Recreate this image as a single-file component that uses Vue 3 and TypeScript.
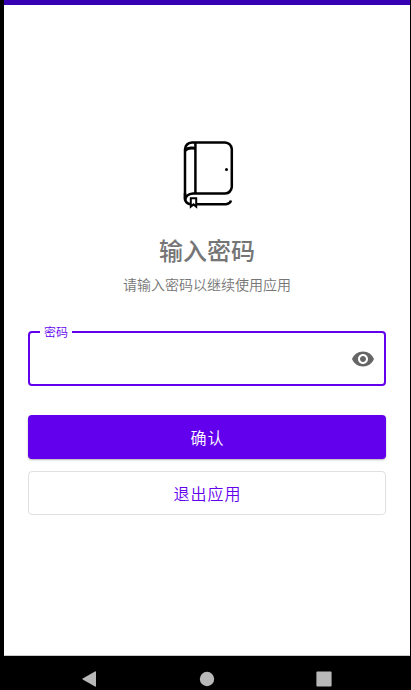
<script setup lang="ts">
import { ref } from 'vue'

const password = ref('')
const visible = ref(false)
</script>

<template>
  <div class="screen">
    <div class="status-bar"></div>
    <main class="content">
      <form class="lock" @submit.prevent>
        <svg class="logo" viewBox="0 0 80 80" fill="none" stroke="#000" aria-hidden="true">
          <path d="M25 9.5H58Q64 10 64.8 16V54Q64 60 58 60.5H26Q19 61 18 67V16.5Q18.5 10 25 9.5Z" stroke-width="2.5" stroke-linejoin="round" />
          <path d="M28.4 9.5V60.5" stroke-width="2.5" />
          <path d="M18 17.5Q21 14 28 15.2" stroke-width="3" />
          <path d="M18 60V65Q18 70 23 71.3M29 71.3H59Q63 71 64 67.5" stroke-width="2.5" />
          <path d="M23.8 65.2H29.2V73.6L26.5 71.4L23.8 73.6Z" stroke-width="2" />
          <circle cx="59.5" cy="36.5" r="1.5" fill="#000" stroke="none" />
        </svg>
        <h1>输入密码</h1>
        <p>请输入密码以继续使用应用</p>
        <div class="field">
          <label for="password">密码</label>
          <input id="password" v-model="password" :type="visible ? 'text' : 'password'" />
          <button class="toggle" type="button" aria-label="显示密码" @click="visible = !visible">
            <svg viewBox="0 0 24 24" fill="#666" aria-hidden="true">
              <path d="M12 4.5C7 4.5 2.73 7.61 1 12c1.73 4.39 6 7.5 11 7.5s9.27-3.11 11-7.5c-1.73-4.39-6-7.5-11-7.5zM12 17c-2.76 0-5-2.24-5-5s2.24-5 5-5 5 2.24 5 5-2.24 5-5 5zm0-8c-1.66 0-3 1.34-3 3s1.34 3 3 3 3-1.34 3-3-1.34-3-3-3z" />
            </svg>
          </button>
        </div>
        <button class="action primary" type="submit">确认</button>
        <button class="action outlined" type="button">退出应用</button>
      </form>
    </main>
    <nav class="nav-bar">
      <button type="button" aria-label="返回">
        <svg viewBox="0 0 16 16" fill="#b8b8b8"><path d="M.7 7.4L13 .4Q14 0 14 1V15Q14 16 13 15.6L.7 8.6Q0 8 .7 7.4Z" /></svg>
      </button>
      <button type="button" aria-label="主屏幕">
        <svg viewBox="0 0 16 16" fill="#b8b8b8"><circle cx="8" cy="8" r="7.2" /></svg>
      </button>
      <button type="button" aria-label="最近任务">
        <svg viewBox="0 0 16 16" fill="#b8b8b8"><rect x=".4" y=".4" width="15.2" height="15.2" rx="1" /></svg>
      </button>
    </nav>
  </div>
</template>

<style>
body {
  margin: 0;
  background: #000;
}
</style>

<style scoped>
.screen {
  box-sizing: border-box;
  min-height: 100vh;
  padding: 0 1px 0 4px;
  display: flex;
  flex-direction: column;
  background: #000;
  font-family: "Noto Sans CJK SC", Roboto, sans-serif;
  font-weight: 350;
}

.status-bar {
  height: 5px;
  background: #3700b3;
}

.content {
  flex: 1;
  display: flex;
  flex-direction: column;
  justify-content: center;
  padding: 0 24px;
  background: #fff;
  border-bottom: 1px solid #c8cccc;
}

.lock {
  display: flex;
  flex-direction: column;
  padding-bottom: 12px;
}

.logo {
  width: 80px;
  height: 80px;
  align-self: center;
}

h1 {
  margin: 21px 0 0;
  font-size: 24px;
  line-height: 32px;
  font-weight: 500;
  text-align: center;
  color: #757575;
}

p {
  margin: 8px 0 0;
  font-size: 14px;
  line-height: 20px;
  text-align: center;
  color: #757575;
}

.field {
  position: relative;
  display: flex;
  align-items: center;
  box-sizing: border-box;
  height: 55px;
  margin-top: 37px;
  border: 2px solid #6200ee;
  border-radius: 4px;
}

label {
  position: absolute;
  top: -10px;
  left: 10px;
  padding: 0 4px;
  background: #fff;
  color: #6200ee;
  font-size: 12px;
  line-height: 18px;
}

input {
  flex: 1;
  min-width: 0;
  height: 48px;
  padding: 0 14px;
  border: 0;
  outline: 0;
  background: transparent;
  font: inherit;
  font-size: 16px;
}

.toggle {
  display: flex;
  padding: 0 9px;
  border: 0;
  background: none;
}

.toggle svg {
  width: 24px;
  height: 24px;
}

.action {
  height: 44px;
  border-radius: 4px;
  font-family: inherit;
  font-size: 16px;
  font-weight: 350;
  letter-spacing: 1px;
  text-indent: 1px;
}

.primary {
  margin-top: 29px;
  border: 0;
  background: #6200ee;
  color: #fff;
  box-shadow: 0 1px 2px rgba(0, 0, 0, 0.3);
}

.outlined {
  margin-top: 12px;
  border: 1px solid #e0e0e0;
  background: #fff;
  color: #6200ee;
}

.nav-bar {
  height: 34px;
  display: flex;
  justify-content: center;
  gap: 101px;
  align-items: flex-end;
}

.nav-bar button {
  display: flex;
  padding: 0 0 3px;
  border: 0;
  background: none;
}

.nav-bar svg {
  width: 16px;
  height: 16px;
}
</style>
